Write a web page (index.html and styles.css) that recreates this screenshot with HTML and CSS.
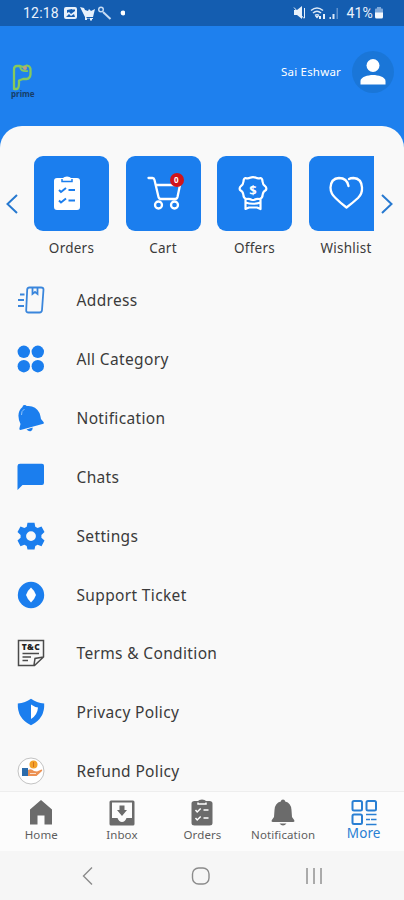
FILE: index.html
```html
<!DOCTYPE html>
<html lang="en">
<head>
<meta charset="UTF-8">
<meta name="viewport" content="width=device-width, initial-scale=1.0">
<title>More</title>
<link rel="stylesheet" href="styles.css">
</head>
<body>
<div class="app">
    <div class="status-bar">
        <span class="time">12:18</span>
        <svg class="status-left" width="62" height="16" viewBox="0 0 62 16">
            <path fill="#e8f1fb" fill-rule="evenodd" d="M3 2h9q2 0 2 2v8q0 2-2 2H3q-2 0-2-2V4q0-2 2-2zm1 3v3l2-1 2 2 4-3V4.500H9V4zM3 12h9l-1-3-3 2-2-2z"/>
            <path fill="#e8f1fb" d="M17 2l4 1 1 2 3 1 1-2 2 2 4-2-2 8h-7l1 1h6v1h-1v1.500h-2V13.500h-3V15h-2v-3z"/>
            <g fill="none" stroke="#c7dcf4" stroke-width="1.400"><circle cx="38" cy="4.500" r="2.300"/><path stroke-width="2" d="M40 7l7.500 7"/></g>
            <circle cx="60" cy="8" r="2.400" fill="#fff"/>
        </svg>
        <svg class="status-right" width="48" height="16" viewBox="0 0 48 16">
            <path fill="#e8f1fb" d="M1 5h3l5-4v13l-5-4H1z"/>
            <path fill="none" stroke="#e8f1fb" d="M1 2.500l10 11M11.500 3v10"/>
            <g fill="none" stroke="#dbe8f7" stroke-width="1.600"><path d="M18 5.500q6-5 12 0M20 8q4-3.500 8 0"/><path d="M22 10.500q2-1.500 4 0"/></g>
            <path fill="#e8f1fb" d="M22 11h4l-2 2.500zM26 11h2v3h-2zM30 9h2v5h-2z"/>
            <path fill="#dbe8f7" d="M36.500 12h1.500v2h-1.500zM39.500 9h2v5h-2z"/>
            <path fill="#5f91cd" d="M43.500 3h1.500v11h-1.500z"/>
        </svg>
        <span class="battery">41%</span>
        <svg class="battery-icon" width="10" height="14" viewBox="0 0 10 14">
            <path fill="#7fa9db" d="M3 1h4v1.500h1q1 0 1 1V7H1V3.500q0-1 1-1h1z"/>
            <path fill="#f4f8fd" d="M1 6.500h8V11q0 1.500-1.500 1.500h-5Q1 12.500 1 11z"/>
        </svg>
    </div>

    <header class="header">
        <div class="logo">
            <svg width="22" height="27" viewBox="0 0 22 27">
                <path fill="none" stroke="#86c95c" stroke-width="2.300" stroke-linejoin="round" d="M3 5q0-3 3-3h3l3 1 4-1.500q4 1 3.500 5v4q-.5 4-4 4.500H12l-4 1.500v2.500Q8 25 5.500 25H3z"/>
                <path fill="none" stroke="#86c95c" stroke-width="1.700" d="M9 3q1 5 8 4"/>
                <circle cx="14" cy="4" r="2" fill="#c59b83"/>
            </svg>
            <span class="logo-name">prime</span>
        </div>
        <span class="user-name">Sai Eshwar</span>
        <div class="avatar">
            <svg width="42" height="42" viewBox="0 0 42 42" fill="#fff"><circle cx="21" cy="14.500" r="6.500"/><path d="M8.500 33.500V30C8.500 26 16 24 21 24s12.500 2 12.500 6v3.500z"/></svg>
        </div>
    </header>

    <main class="sheet">
        <section class="shortcuts">
            <svg class="arrow" width="12" height="20" viewBox="0 0 12 20"><path d="M11 1L1.500 10l9.500 9"/></svg>
            <div class="tiles">
                <div class="tile">
                    <div class="tile-box">
                        <svg width="75" height="75" viewBox="0 0 75 75">
                            <path fill="#fff" d="M23 22h6q1-1.500 4-1.500T37 22h6q3 0 3 3v26q0 3-3 3H23q-3 0-3-3V25q0-3 3-3z"/>
                            <path fill="none" stroke="#1b7eee" stroke-width="1.500" d="M28 23v2.500h10V23"/>
                            <path fill="none" stroke="#1b7eee" stroke-width="2" d="M25 34l2 2 5-4M34.500 34H41M25 44.500l2 2 5-4M34.500 44.500H41"/>
                        </svg>
                    </div>
                    <span>Orders</span>
                </div>
                <div class="tile">
                    <div class="tile-box">
                        <svg width="75" height="75" viewBox="0 0 75 75">
                            <g fill="none" stroke="#fff" stroke-width="2.300" stroke-linecap="round" stroke-linejoin="round"><path d="M22.500 22h4q1.500 0 2 2l4 17q.5 2 2.500 2h14q2 0 2.500-2L54 29H30"/><circle cx="32.500" cy="49" r="3.500"/><circle cx="48.500" cy="49" r="3.500"/></g>
                        </svg>
                        <span class="count">0</span>
                    </div>
                    <span>Cart</span>
                </div>
                <div class="tile">
                    <div class="tile-box">
                        <svg width="75" height="75" viewBox="0 0 75 75">
                            <path fill="none" stroke="#fff" stroke-width="2.200" stroke-linejoin="round" d="M28.500 22q2.500 1 4.500-.2 3-1.300 6 0 2 1.200 4.500.2 2 .5 2 3.500.3 3 2.500 4.500 2 1.700 1 4-3 1.500-3.300 4.500-.2 4-3.200 4.500-3-.5-5 .7-1.500.6-3 0-2-1.200-5-.7-3-.5-3.200-4.500-.3-3-3.300-4.500-1-2.300 1-4 2.200-1.500 2.500-4.500 0-3 2-3.500zM28.500 43v10l3.500-1.500h8l3.500 1.500V43M28.500 46.500q7.500 2.500 15 0"/>
                            <text class="dollar" x="36" y="38.500" text-anchor="middle">$</text>
                        </svg>
                    </div>
                    <span>Offers</span>
                </div>
                <div class="tile">
                    <div class="tile-box">
                        <svg width="75" height="75" viewBox="0 0 75 75"><path fill="none" stroke="#fff" stroke-width="2.300" stroke-linecap="round" stroke-linejoin="round" d="M39.500 30q-1.500-8-9.500-8-8 .5-8.500 9.500 0 6 5 10.500 5 5 11 9.500 6-4.500 11.500-9.500 4.500-4.500 4-10.500-.5-9-8.500-9.500-3 0-4.500 1"/></svg>
                    </div>
                    <span>Wishlist</span>
                </div>
            </div>
            <svg class="arrow" width="12" height="20" viewBox="0 0 12 20"><path d="M1 1l9.500 9L1 19"/></svg>
        </section>

        <ul class="menu">
            <li>
                <svg class="outline" width="28" height="28" viewBox="0 0 28 28">
                    <path d="M12.500 1.500H24q2.500 0 2.500 2L25 24q-.2 2.500-2.500 2.500H11.500Q9 26.500 9.200 24l1-20.500q.3-2 2.300-2zM15.500 1.500V8l2.500-2 2.500 2V1.500"/><path d="M3 8.500h4.500M1 14h6M1 20h6"/>
                </svg>
                <span>Address</span>
            </li>
            <li>
                <svg width="28" height="28" viewBox="0 0 28 28"><circle cx="6.800" cy="6.800" r="6.200"/><circle cx="20.800" cy="6.800" r="6.200"/><circle cx="6.800" cy="21.200" r="6.200"/><circle cx="20.800" cy="21.200" r="6.200"/></svg>
                <span>All Category</span>
            </li>
            <li>
                <svg width="28" height="28" viewBox="0 0 28 28"><path d="M5.500 3q0-2 2-2t2 1q9-1 13 7 1 3 1.500 6l2.500 3q1 2-1 2L3.500 26q-1.500 0-1-2l1-4Q-1.500 9 5.500 3zM9.500 25.500l6-2q.5 2.500-1.500 3.500t-4.500-1.500z"/><path fill="none" stroke="#8fc3fa" stroke-width="1" d="M4.500 11q-.5-4 3-6"/></svg>
                <span>Notification</span>
            </li>
            <li>
                <svg width="28" height="28" viewBox="0 0 28 28"><path d="M3 .8h22q2 0 2 2v17q0 2.200-2 2.200H5.500l-5 5V3Q.5.800 3 .8z"/></svg>
                <span>Chats</span>
            </li>
            <li>
                <svg width="28" height="28" viewBox="0 0 28 28"><path fill-rule="evenodd" d="M10.500.7h7l.8 4 2.300 1.300 3.900-1.400 3 5.400-3.100 3v2.800l3.100 2.700-3 5.700-3.900-1.400-2.300 1.300-.8 3.500h-7l-.8-3.500-2.300-1.300-3.900 1.400-3-5.700 3.100-2.700V13L.5 10l3-5.400L7.400 6l2.300-1.300zM14 9.200a4.900 4.900 0 100 9.800 4.900 4.900 0 000-9.800z"/></svg>
                <span>Settings</span>
            </li>
            <li>
                <svg width="28" height="28" viewBox="0 0 28 28"><circle cx="14" cy="14" r="13.200"/><path fill="#fff" d="M14 6.500q3.500 3 5 7.500-1.500 4.500-5 7.500-3.500-3-5-7.500 1.500-4.500 5-7.500z"/></svg>
                <span>Support Ticket</span>
            </li>
            <li>
                <svg width="28" height="28" viewBox="0 0 28 28">
                    <path fill="none" stroke="#4b4b4b" stroke-width="1.500" d="M1.500 1.500h25V18l-9 8.500h-16zM17 26l1-6.500 8.500-1.500M5.500 14.500h16.500M5.500 18h8.500M5.500 21.500h5.500"/>
                    <text class="tc" x="14" y="10.800" text-anchor="middle">T&amp;C</text>
                </svg>
                <span>Terms &amp; Condition</span>
            </li>
            <li>
                <svg width="28" height="28" viewBox="0 0 28 28"><path d="M14 .8q5.500 4.200 13.200 4.700Q28 20.500 14 27.300 0 20.500.8 5.500 8.500 5 14 .8z"/><path fill="#fff" d="M14 6.500q3.500 2.500 7 3Q20.500 17 14 21z"/></svg>
                <span>Privacy Policy</span>
            </li>
            <li>
                <svg width="28" height="28" viewBox="0 0 28 28">
                    <circle cx="14" cy="14" r="13" fill="#fff" stroke="#bcbcbc" stroke-width=".9"/>
                    <circle cx="16.500" cy="7.500" r="4" fill="#f3a229"/><path stroke="#d66f18" d="M16.500 5v5"/>
                    <path fill="#2d6cab" d="M5 11h6v8H5z"/><path fill="#ec9153" d="M11 13q3-2 6 1l3 .5 4.500-2q1.500 0 0 2l-5 4.500H11z"/><path stroke="#fff" stroke-width=".7" fill="none" d="M13 16.500h6"/>
                </svg>
                <span>Refund Policy</span>
            </li>
        </ul>
    </main>

    <nav class="tabs">
        <div class="tab">
            <svg width="28" height="28" viewBox="0 0 28 28"><path d="M14 1l11 9.500v15h-7.500v-9h-7v9H3v-15z"/></svg>
            <span>Home</span>
        </div>
        <div class="tab">
            <svg width="28" height="28" viewBox="0 0 28 28"><path fill-rule="evenodd" d="M3 1.500h22q1.500 0 1.500 1.500v22q0 1.500-1.500 1.500H3q-1.500 0-1.500-1.500V3q0-1.500 1.500-1.500zM4 3.500V19h5.500q1.500 4 4.500 4t4.500-4H24V3.500z"/><path d="M11.500 6.500h5V11H19l-5 6-5-6h2.500z"/></svg>
            <span>Inbox</span>
        </div>
        <div class="tab">
            <svg width="28" height="28" viewBox="0 0 28 28"><path d="M6.500 2H10q1-1.500 4-1.500T18 2h3.500q3 0 3 2.500V24q0 2.500-3 2.500h-15q-3 0-3-2.500V4.500Q3.500 2 6.500 2z"/><path fill="none" stroke="#fff" stroke-width="1.500" d="M10 3.500V5h8V3.500M7.500 11l1.700 2 3.500-3.500M15.500 11h5M7.500 19l1.700 2 3.500-3.500M15.500 19h5"/></svg>
            <span>Orders</span>
        </div>
        <div class="tab">
            <svg width="28" height="28" viewBox="0 0 28 28"><path d="M14 .5q2 0 2.200 2 6 1.500 6.300 8.500l.5 7 2.300 3.300q.7 1.700-1 1.700H3.700q-1.700 0-1-1.700L5 18l.5-7q.3-7 6.300-8.500Q12 .5 14 .5zM10.500 24.500h7q-1.500 2-3.500 2t-3.500-2z"/></svg>
            <span>Notification</span>
        </div>
        <div class="tab active">
            <svg width="28" height="28" viewBox="0 0 28 28"><g fill="none" stroke="#297fd3" stroke-width="2"><rect x="2.500" y="2" width="9.500" height="9.500" rx="1.500"/><rect x="16.500" y="2" width="9.500" height="9.500" rx="1.500"/><rect x="2.500" y="15.500" width="9.500" height="9.500" rx="1.500"/><path stroke-width="1.500" d="M16 15.500h10.500M16 20.500h4M21 20.500h5.500M16 25.500h10.500"/></g></svg>
            <span>More</span>
        </div>
    </nav>

    <div class="system-bar">
        <svg width="20" height="20" viewBox="0 0 20 20"><path d="M15 1.500L6.500 10l8.500 8.500"/></svg>
        <svg width="20" height="20" viewBox="0 0 20 20"><rect x="1.500" y="2" width="16.500" height="16" rx="6"/></svg>
        <svg width="20" height="20" viewBox="0 0 20 20"><path d="M3 2v16M10 2v16M17 2v16"/></svg>
    </div>
</div>
</body>
</html>
```

FILE: styles.css
```css
body {
    margin: 0;
    font-family: "Noto Sans", sans-serif;
    color: #3b3b3b;
}

svg {
    display: block;
    flex: none;
}

.app {
    width: 404px;
    height: 900px;
    display: flex;
    flex-direction: column;
    overflow: hidden;
    background: #1e80ee;
}

.status-bar {
    height: 26px;
    flex: none;
    box-sizing: border-box;
    padding: 0 20px 0 23px;
    display: flex;
    align-items: center;
    background: #145db0;
    color: #eaf2fc;
    font-family: Roboto, sans-serif;
    font-size: 14px;
    letter-spacing: 0.2px;
}

.status-left {
    margin-left: 4px;
}

.status-right {
    margin-left: auto;
}

.battery {
    margin-left: 5px;
}

.battery-icon {
    margin-left: 1px;
}

.header {
    height: 100px;
    flex: none;
    box-sizing: border-box;
    padding: 0 10px 9px 11px;
    display: flex;
    align-items: center;
}

.logo {
    width: 26px;
    margin: 18px auto 0 0;
}

.logo-name {
    display: block;
    margin-top: -2px;
    font-size: 8px;
    line-height: 9px;
    font-weight: 700;
    color: #173e68;
}

.user-name {
    margin-right: 11px;
    font-size: 11.5px;
    letter-spacing: 0.2px;
    color: #fff;
}

.avatar {
    border-radius: 50%;
    background: #1a76d8;
}

.sheet {
    flex: 1;
    min-height: 0;
    overflow: hidden;
    background: #f9f9f9;
    border-radius: 22px 22px 0 0;
}

.shortcuts {
    padding: 30px 11px 0 6px;
    display: flex;
    align-items: flex-start;
    height: 115px;
}

.arrow {
    margin-top: 38px;
    fill: none;
    stroke: #2779d0;
    stroke-width: 2;
}

.tiles {
    width: 340px;
    flex: none;
    margin: 0 7px 0 16px;
    display: flex;
    gap: 16.5px;
    overflow: hidden;
}

.tile {
    width: 75px;
    flex: none;
    text-align: center;
    font-size: 13.5px;
    line-height: 18px;
    letter-spacing: 0.25px;
    text-indent: -1px;
}

.tile-box {
    position: relative;
    height: 75px;
    margin-bottom: 8px;
    border-radius: 9px;
    background: #1b7eee;
}

.dollar {
    font: 700 13px "Noto Sans", sans-serif;
    fill: #fff;
}

.count {
    position: absolute;
    left: 44px;
    top: 17px;
    width: 14px;
    height: 14px;
    border-radius: 50%;
    background: #d0141b;
    color: #fff;
    font-size: 8px;
    line-height: 14px;
    font-weight: 700;
    text-indent: 0;
}

.menu {
    margin: 0;
    padding: 0 0 0 16.5px;
    list-style: none;
}

.menu li {
    height: 58.85px;
    display: flex;
    align-items: center;
    gap: 32px;
    font-size: 15.5px;
    letter-spacing: 0.35px;
}

.menu svg {
    fill: #1b7eee;
    letter-spacing: 0;
}

.menu .outline {
    fill: none;
    stroke: #3a86dc;
    stroke-width: 1.8;
}

.tc {
    font: 900 8.5px "Noto Sans", sans-serif;
    letter-spacing: 0.4px;
    fill: #222;
}

.tabs {
    height: 60px;
    flex: none;
    box-sizing: border-box;
    padding: 7px 0 0 1px;
    border-top: 1px solid #eeeeee;
    display: grid;
    grid-template-columns: repeat(5, 1fr);
    background: #fcfcfc;
    color: #5e5e5e;
    font-size: 11.5px;
    line-height: 16px;
    letter-spacing: 0.1px;
}

.tab {
    display: flex;
    flex-direction: column;
    align-items: center;
    fill: #6b6b6b;
}

.tab.active {
    color: #297fd3;
    font-size: 13.5px;
    line-height: 13px;
}

.system-bar {
    height: 49px;
    flex: none;
    box-sizing: border-box;
    padding: 0 80px 0 77px;
    display: flex;
    justify-content: space-between;
    align-items: center;
    background: #f6f6f6;
    fill: none;
    stroke: #8b8b8b;
    stroke-width: 1.4;
}
```
